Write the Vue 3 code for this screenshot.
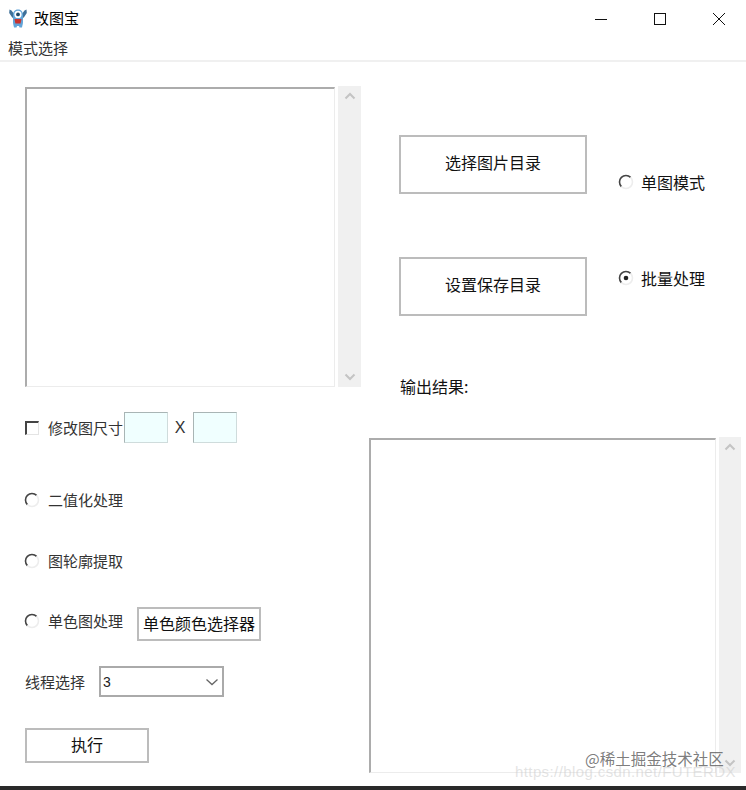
<template>
  <div class="app">
    <!-- 标题栏 -->
    <div class="titlebar">
      <svg class="logo" viewBox="0 0 20 20" width="20" height="20">
        <path d="M4.5 10 L1.2 5 L1.5 1.5 L3.5 2.5 L6.5 6.5 Z M15.5 10 L18.8 5 L18.5 1.5 L16.5 2.5 L13.5 6.5 Z" fill="#3f7199" />
        <path d="M10 1.5 C13.5 1.5 15 4 15 7 L15 14 C15 16 14.5 17 14 19.5 L11.5 19.5 L11 18 L9 18 L8.5 19.5 L6 19.5 C5.5 17 5 16 5 14 L5 7 C5 4 6.5 1.5 10 1.5 Z" fill="#62a4d8" />
        <circle cx="10" cy="6.4" r="3.6" fill="#fff" />
        <circle cx="10" cy="6.4" r="1.9" fill="#1d4868" />
        <path d="M6.5 11 L13.5 11 L12.6 15.5 L7.4 15.5 Z" fill="#c8332e" />
      </svg>
      <span class="title">改图宝</span>
      <div class="win-btns">
        <svg viewBox="0 0 14 14" width="14" height="14"><path d="M1 7.5 H13" stroke="#111" stroke-width="1" /></svg>
        <svg viewBox="0 0 14 14" width="14" height="14"><rect x="1.5" y="1.5" width="11" height="11" fill="none" stroke="#111" stroke-width="1" /></svg>
        <svg viewBox="0 0 14 14" width="14" height="14"><path d="M1 1 L13 13 M13 1 L1 13" stroke="#111" stroke-width="1" /></svg>
      </div>
    </div>
    <div class="menubar">模式选择</div>

    <div class="content">
      <!-- 左侧 -->
      <div class="left">
        <div class="list-wrap">
          <div class="listbox left-list"></div>
          <div class="scrollbar left-scroll">
            <svg viewBox="0 0 12 8" width="12" height="8"><path d="M1.5 6.5 L6 2 L10.5 6.5" fill="none" stroke="#c4c4c4" stroke-width="2" /></svg>
            <svg viewBox="0 0 12 8" width="12" height="8"><path d="M1.5 1.5 L6 6 L10.5 1.5" fill="none" stroke="#c4c4c4" stroke-width="2" /></svg>
          </div>
        </div>

        <div class="size-row">
          <span class="checkbox"></span>
          <span class="label">修改图尺寸</span>
          <div class="num-input"></div>
          <span class="times">X</span>
          <div class="num-input"></div>
        </div>

        <div class="radio-row first">
          <svg class="radio" viewBox="0 0 16 16" width="16" height="16">
            <path d="M3.4 12.6 A6.5 6.5 0 1 1 12.6 3.4" fill="none" stroke="#444" stroke-width="1.6" />
            <path d="M12.6 3.4 A6.5 6.5 0 0 1 3.4 12.6" fill="none" stroke="#ededed" stroke-width="1.6" />
          </svg>
          <span class="label">二值化处理</span>
        </div>
        <div class="radio-row second">
          <svg class="radio" viewBox="0 0 16 16" width="16" height="16">
            <path d="M3.4 12.6 A6.5 6.5 0 1 1 12.6 3.4" fill="none" stroke="#444" stroke-width="1.6" />
            <path d="M12.6 3.4 A6.5 6.5 0 0 1 3.4 12.6" fill="none" stroke="#ededed" stroke-width="1.6" />
          </svg>
          <span class="label">图轮廓提取</span>
        </div>
        <div class="mono-row">
          <div class="radio-row">
            <svg class="radio" viewBox="0 0 16 16" width="16" height="16">
              <path d="M3.4 12.6 A6.5 6.5 0 1 1 12.6 3.4" fill="none" stroke="#444" stroke-width="1.6" />
              <path d="M12.6 3.4 A6.5 6.5 0 0 1 3.4 12.6" fill="none" stroke="#ededed" stroke-width="1.6" />
            </svg>
            <span class="label">单色图处理</span>
          </div>
          <button class="btn mono-btn">单色颜色选择器</button>
        </div>

        <div class="thread-row">
          <span class="label">线程选择</span>
          <div class="select">
            <span>3</span>
            <svg viewBox="0 0 14 8" width="14" height="8"><path d="M1.5 1.5 L7 6.5 L12.5 1.5" fill="none" stroke="#666" stroke-width="1.3" /></svg>
          </div>
        </div>

        <button class="btn run-btn">执行</button>
      </div>

      <!-- 右侧 -->
      <div class="right">
        <div class="action-row one">
          <button class="btn dir-btn">选择图片目录</button>
          <div class="mode">
            <svg class="radio" viewBox="0 0 16 16" width="16" height="16">
              <path d="M3.4 12.6 A6.5 6.5 0 1 1 12.6 3.4" fill="none" stroke="#444" stroke-width="1.6" />
              <path d="M12.6 3.4 A6.5 6.5 0 0 1 3.4 12.6" fill="none" stroke="#ededed" stroke-width="1.6" />
            </svg>
            <span>单图模式</span>
          </div>
        </div>
        <div class="action-row two">
          <button class="btn dir-btn">设置保存目录</button>
          <div class="mode">
            <svg class="radio" viewBox="0 0 16 16" width="16" height="16">
              <path d="M3.4 12.6 A6.5 6.5 0 1 1 12.6 3.4" fill="none" stroke="#444" stroke-width="1.6" />
              <path d="M12.6 3.4 A6.5 6.5 0 0 1 3.4 12.6" fill="none" stroke="#ededed" stroke-width="1.6" />
              <circle cx="8" cy="8" r="2.3" fill="#222" />
            </svg>
            <span>批量处理</span>
          </div>
        </div>
        <div class="result-label">输出结果:</div>
        <div class="list-wrap">
          <div class="listbox right-list"></div>
          <div class="scrollbar right-scroll">
            <svg viewBox="0 0 12 8" width="12" height="8"><path d="M1.5 6.5 L6 2 L10.5 6.5" fill="none" stroke="#c4c4c4" stroke-width="2" /></svg>
            <svg viewBox="0 0 12 8" width="12" height="8"><path d="M1.5 1.5 L6 6 L10.5 1.5" fill="none" stroke="#c4c4c4" stroke-width="2" /></svg>
          </div>
        </div>
      </div>
    </div>

    <div class="strip"></div>

    <!-- 水印 -->
    <div class="mark-main">@稀土掘金技术社区</div>
    <div class="mark-url">https://blog.csdn.net/FUTERDX</div>
  </div>
</template>

<script setup>
</script>

<style>
html, body {
  margin: 0;
  background: #fff;
}
</style>

<style scoped>
.app {
  position: relative;
  width: 746px;
  height: 790px;
  overflow: hidden;
  display: flex;
  flex-direction: column;
  background: #fff;
  color: #111;
  font-family: "Noto Sans CJK SC", "Liberation Sans", sans-serif;
}

.titlebar {
  height: 37px;
  display: flex;
  align-items: center;
  padding-left: 8px;
  box-sizing: border-box;
  flex-shrink: 0;
}

.logo {
  margin-top: -2px;
}

.title {
  margin-left: 6px;
  margin-top: -3px;
  font-size: 15px;
  color: #000;
}

.win-btns {
  margin-left: auto;
  display: flex;
  gap: 45px;
  padding-right: 20px;
}

.win-btns svg {
  display: block;
}

.menubar {
  height: 23px;
  line-height: 21px;
  padding-left: 8px;
  font-size: 15px;
  color: #333;
  border-bottom: 2px solid #f0f0f0;
  flex-shrink: 0;
}

.content {
  flex: 1;
  display: flex;
  min-height: 0;
}

.left {
  width: 369px;
  box-sizing: border-box;
  padding: 25px 0 0 25px;
  flex-shrink: 0;
}

.right {
  flex: 1;
  padding-top: 73px;
}

.list-wrap {
  display: flex;
  gap: 3px;
}

.listbox {
  box-sizing: border-box;
  background: #fff;
  border-top: 2px solid #acacac;
  border-left: 2px solid #acacac;
  border-right: 1px solid #ececec;
  border-bottom: 1px solid #ececec;
}

.left-list {
  width: 310px;
  height: 300px;
}

.right-list {
  width: 347px;
  height: 335px;
}

.scrollbar {
  display: flex;
  flex-direction: column;
  justify-content: space-between;
  align-items: center;
  box-sizing: border-box;
  padding: 6px 0;
  background: #f0f0f0;
  margin-top: -1px;
}

.left-scroll {
  width: 23px;
  height: 301px;
}

.right-scroll {
  width: 22px;
  height: 336px;
}

.label {
  font-size: 15px;
  line-height: 20px;
  color: #333;
}

.size-row {
  display: flex;
  align-items: center;
  margin-top: 25px;
  height: 31px;
}

.checkbox {
  width: 14px;
  height: 14px;
  box-sizing: border-box;
  margin-right: 9px;
  border-top: 2px solid #444;
  border-left: 2px solid #444;
  border-right: 1px solid #e4e4e4;
  border-bottom: 1px solid #e4e4e4;
}

.num-input {
  width: 44px;
  height: 31px;
  margin-left: 1px;
  box-sizing: border-box;
  background: #f0ffff;
  border: 1px solid #cfdcdc;
  border-top-color: #a9b5b5;
  border-left-color: #a9b5b5;
}

.times {
  width: 24px;
  text-align: center;
  font-size: 16px;
  font-family: "Liberation Sans", sans-serif;
  color: #333;
}

.radio-row {
  display: flex;
  align-items: center;
  height: 20px;
}

.radio-row.first {
  margin-top: 47px;
}

.radio-row.second {
  margin-top: 41px;
}

.radio {
  flex-shrink: 0;
  margin-left: -1px;
  margin-right: 8px;
}

.mono-row {
  display: flex;
  margin-top: 36px;
  height: 34px;
}

.mono-row .radio-row {
  margin-top: 4px;
}

.btn {
  display: block;
  padding: 0 0 4px;
  box-sizing: border-box;
  background: #fff;
  border: 2px solid #bcbcbc;
  border-radius: 0;
  font-family: inherit;
  color: #111;
  font-size: 16px;
}

.mono-btn {
  width: 124px;
  height: 34px;
  margin-left: 14px;
  padding-bottom: 3px;
  white-space: nowrap;
}

.thread-row {
  display: flex;
  align-items: center;
  margin-top: 25px;
  height: 31px;
}

.select {
  display: flex;
  align-items: center;
  justify-content: space-between;
  width: 125px;
  height: 31px;
  margin-left: 14px;
  padding: 0 3px 0 2px;
  box-sizing: border-box;
  border: 2px solid #aaa;
  font-family: "Liberation Sans", sans-serif;
  font-size: 14px;
  color: #222;
}

.run-btn {
  width: 124px;
  height: 35px;
  margin-top: 31px;
}

.action-row {
  display: flex;
  margin-left: 30px;
}

.action-row.two {
  margin-top: 63px;
}

.dir-btn {
  width: 188px;
  height: 59px;
  padding-bottom: 6px;
}

.mode {
  display: flex;
  align-items: center;
  height: 20px;
  margin-left: 31px;
  font-size: 16px;
  line-height: 18px;
  color: #111;
}

.one .mode {
  margin-top: 37px;
}

.two .mode {
  margin-top: 11px;
}

.mode .radio {
  margin-left: 0;
  margin-right: 7px;
}

.result-label {
  margin: 61px 0 41px 31px;
  height: 20px;
  line-height: 18px;
  font-size: 16px;
  color: #111;
}

.strip {
  height: 4px;
  background: #2a2a2a;
  flex-shrink: 0;
}

.mark-main {
  position: absolute;
  left: 585px;
  top: 751px;
  font-size: 15.5px;
  line-height: 14px;
  white-space: nowrap;
  color: rgba(90, 90, 90, 0.8);
}

.mark-url {
  position: absolute;
  left: 515px;
  top: 765px;
  font-family: "Liberation Sans", sans-serif;
  font-size: 15px;
  line-height: 13px;
  letter-spacing: 0.4px;
  white-space: nowrap;
  color: rgba(200, 200, 200, 0.5);
}
</style>
